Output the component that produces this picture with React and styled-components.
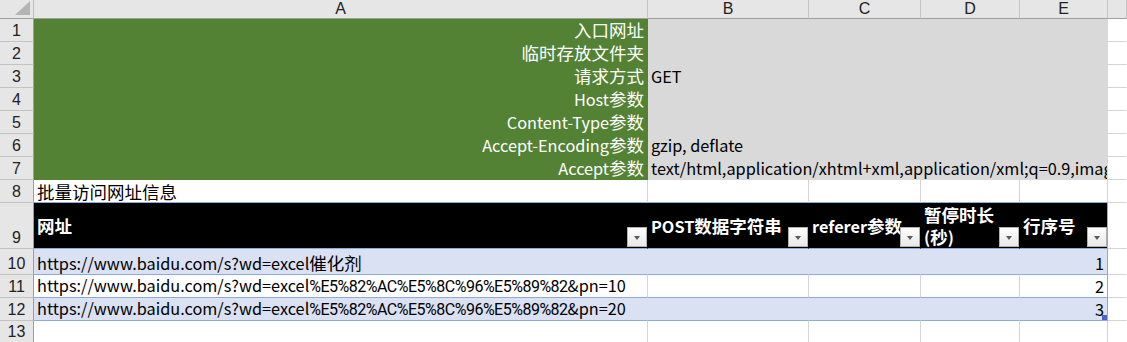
import React from 'react';
import styled, { createGlobalStyle } from 'styled-components';

const GlobalStyle = createGlobalStyle`
  html, body {
    margin: 0;
    padding: 0;
    background: #fff;
  }
  body {
    font-family: "Noto Sans CJK SC", "Liberation Sans", sans-serif;
    font-size: 16.3px;
    color: #000;
    overflow: hidden;
  }
`;

const GRID = '#d4d4d4';
const BLUE = '#8ea9db';
const BAND = '#d9e1f2';
const GREEN = '#548235';
const GRAY = '#d9d9d9';
const HEAD = '#e6e6e6';

const Sheet = styled.div`
  display: grid;
  grid-template-columns: 34px 614px 161px 112px 99px 88px 1fr;
  grid-template-rows: 19px repeat(8, 23px) 46px 26px 23px 23px 1fr;
  width: 1127px;
  height: 342px;
  overflow: hidden;
`;

const Corner = styled.div`
  position: relative;
  background: ${HEAD};
  border-right: 1px solid #bdbdbd;
  border-bottom: 1px solid #9e9e9e;
`;

const CornerMark = styled.span`
  position: absolute;
  right: 3px;
  bottom: 3px;
  width: 15px;
  height: 14px;
  background: #b4b4b4;
  clip-path: polygon(100% 0, 100% 100%, 0 100%);
`;

const ColHead = styled.div`
  background: ${HEAD};
  border-right: 1px solid #c4c4c4;
  border-bottom: 1px solid #9e9e9e;
  display: flex;
  align-items: center;
  justify-content: center;
  font-family: "Liberation Sans", sans-serif;
  font-size: 16px;
  line-height: 18px;
  color: #222;
`;

const RowHead = styled.div`
  background: ${HEAD};
  border-right: 1px solid #9e9e9e;
  border-bottom: 1px solid #c4c4c4;
  display: flex;
  align-items: flex-end;
  justify-content: center;
  font-family: "Liberation Sans", sans-serif;
  font-size: 16px;
  line-height: 21px;
  color: #222;
`;

const Cell = styled.div`
  grid-column: span ${(p) => p.$span || 1};
  position: relative;
  min-width: 0;
  background: ${(p) => p.$fill || '#fff'};
  border-right: 1px solid ${(p) => p.$vline || GRID};
  border-bottom: 1px solid ${(p) => p.$hline || GRID};
  color: ${(p) => p.$ink || '#000'};
  display: flex;
  align-items: flex-end;
  justify-content: ${(p) => (p.$right ? 'flex-end' : 'flex-start')};
  padding: 0 3px;
  line-height: 21px;
  white-space: nowrap;
  overflow-x: ${(p) => (p.$clip ? 'hidden' : 'visible')};
`;

const HeadCell = styled.div`
  position: relative;
  background: #000;
  border-right: 1px solid ${(p) => (p.$last ? BLUE : '#000')};
  border-bottom: 1px solid ${BLUE};
  color: #fff;
  font-weight: 700;
  display: flex;
  align-items: center;
  padding: 0 3px;
  line-height: 22px;
  white-space: nowrap;
`;

const Stack = styled.span`
  display: flex;
  flex-direction: column;
`;

/* Han characters run wider than the Latin text in the sheet font */
const Han = styled.span`
  font-size: 17.5px;
`;

/* percent-encoded bytes: the sheet font sets digits and % narrow */
const Escaped = styled.span`
  font-family: Roboto, "Noto Sans CJK SC", sans-serif;
  font-size: 16px;
  letter-spacing: -0.5px;
`;

const FilterButton = styled.span`
  position: absolute;
  right: 0;
  bottom: 1px;
  width: 20px;
  height: 20px;
  box-sizing: border-box;
  border: 1px solid #b0b0b0;
  background: linear-gradient(#fdfdfd, #e9e9e9);
  z-index: 1;

  &::after {
    content: '';
    position: absolute;
    left: 6px;
    top: 8px;
    border-left: 3.5px solid transparent;
    border-right: 3.5px solid transparent;
    border-top: 4px solid #5a5a5a;
  }
`;

const ResizeHandle = styled.span`
  position: absolute;
  right: 0;
  bottom: 0;
  width: 5px;
  height: 5px;
  background: #4a63c5;
`;

const RUNS = /([\u3000-\u9fff\uff00-\uffef]+|(?:%[0-9A-F]{2})+)/;
const IS_HAN = /^[\u3000-\u9fff\uff00-\uffef]/;

const Txt = ({ children }) => {
  if (typeof children !== 'string') return children ?? null;
  return children
    .split(RUNS)
    .filter(Boolean)
    .map((part, i) => {
      if (IS_HAN.test(part)) return <Han key={i}>{part}</Han>;
      if (part[0] === '%') return <Escaped key={i}>{part}</Escaped>;
      return <span key={i}>{part}</span>;
    });
};

const COLS = ['A', 'B', 'C', 'D', 'E'];

const SETTINGS = [
  ['入口网址', ''],
  ['临时存放文件夹', ''],
  ['请求方式', 'GET'],
  ['Host参数', ''],
  ['Content-Type参数', ''],
  ['Accept-Encoding参数', 'gzip, deflate'],
  ['Accept参数', 'text/html,application/xhtml+xml,application/xml;q=0.9,image/webp,*/*;q=0.8'],
];

const HEADERS = [
  ['网址'],
  ['POST数据字符串'],
  ['referer参数'],
  ['暂停时长', '(秒)'],
  ['行序号'],
];

const LINKS = [
  'https://www.baidu.com/s?wd=excel催化剂',
  'https://www.baidu.com/s?wd=excel%E5%82%AC%E5%8C%96%E5%89%82&pn=10',
  'https://www.baidu.com/s?wd=excel%E5%82%AC%E5%8C%96%E5%89%82&pn=20',
];

export default function App() {
  return (
    <>
      <GlobalStyle />
      <Sheet>
        <Corner>
          <CornerMark />
        </Corner>
        {COLS.map((c) => (
          <ColHead key={c}>{c}</ColHead>
        ))}
        <ColHead />

        {SETTINGS.map(([label, value], i) => (
          <React.Fragment key={label}>
            <RowHead>{i + 1}</RowHead>
            <Cell $fill={GREEN} $vline={GREEN} $hline={GREEN} $ink="#fff" $right>
              <span>
                <Txt>{label}</Txt>
              </span>
            </Cell>
            <Cell $span={4} $fill={GRAY} $vline={GRAY} $hline={GRAY} $clip>
              {value}
            </Cell>
            <Cell $vline="transparent" />
          </React.Fragment>
        ))}

        <RowHead>8</RowHead>
        <Cell $hline={BLUE}>
          <Han>批量访问网址信息</Han>
        </Cell>
        <Cell $hline={BLUE} />
        <Cell $hline={BLUE} />
        <Cell $hline={BLUE} />
        <Cell $hline={BLUE} />
        <Cell $vline="transparent" />

        <RowHead>9</RowHead>
        {HEADERS.map((lines, i) => (
          <HeadCell key={lines[0]} $last={i === HEADERS.length - 1}>
            <Stack>
              {lines.map((l) => (
                <span key={l}>
                  <Txt>{l}</Txt>
                </span>
              ))}
            </Stack>
            <FilterButton />
          </HeadCell>
        ))}
        <Cell $vline="transparent" />

        {LINKS.map((link, i) => {
          const band = i % 2 === 0;
          const fill = band ? BAND : '#fff';
          const vline = band ? BAND : GRID;
          return (
            <React.Fragment key={link}>
              <RowHead>{10 + i}</RowHead>
              <Cell $fill={fill} $vline={vline} $hline={BLUE}>
                <span>
                  <Txt>{link}</Txt>
                </span>
              </Cell>
              <Cell $fill={fill} $vline={vline} $hline={BLUE} />
              <Cell $fill={fill} $vline={vline} $hline={BLUE} />
              <Cell $fill={fill} $vline={vline} $hline={BLUE} />
              <Cell $fill={fill} $vline={BLUE} $hline={BLUE} $right>
                {i + 1}
                {i === LINKS.length - 1 && <ResizeHandle />}
              </Cell>
              <Cell $vline="transparent" />
            </React.Fragment>
          );
        })}

        <RowHead>13</RowHead>
        <Cell />
        <Cell />
        <Cell />
        <Cell />
        <Cell />
        <Cell $vline="transparent" />
      </Sheet>
    </>
  );
}
